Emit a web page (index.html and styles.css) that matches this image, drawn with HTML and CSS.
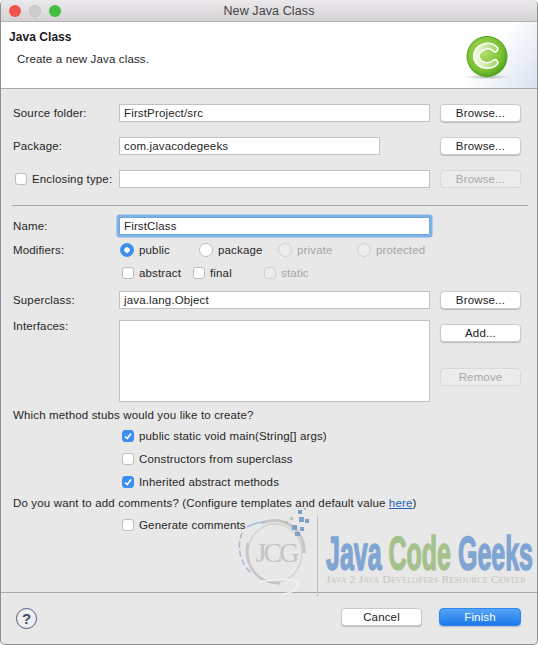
FILE: index.html
```html
<!DOCTYPE html>
<html lang="en">
<head>
    <meta charset="UTF-8">
    <title>New Java Class</title>
    <link rel="stylesheet" href="styles.css">
</head>
<body>
    <div class="window">
        <div class="titlebar">
            <div class="lights">
                <span class="light red"></span>
                <span class="light grey"></span>
                <span class="light green"></span>
            </div>
            <span class="title">New Java Class</span>
        </div>

        <div class="banner">
            <div>
                <h1>Java Class</h1>
                <p>Create a new Java class.</p>
            </div>
            <svg class="class-icon" width="46" height="44" viewBox="0 0 46 44">
                <defs>
                    <radialGradient id="ball" cx="0.42" cy="0.4" r="0.7">
                        <stop offset="0" stop-color="#b4de6c"/>
                        <stop offset="0.65" stop-color="#78c030"/>
                        <stop offset="1" stop-color="#3f9612"/>
                    </radialGradient>
                    <radialGradient id="ground">
                        <stop offset="0" stop-color="#7f8a70" stop-opacity="0.6"/>
                        <stop offset="1" stop-color="#7f8a70" stop-opacity="0"/>
                    </radialGradient>
                    <linearGradient id="inner" x1="0" y1="0" x2="1" y2="0">
                        <stop offset="0" stop-color="#eef8dc"/>
                        <stop offset="1" stop-color="#a8d870"/>
                    </linearGradient>
                </defs>
                <ellipse cx="23" cy="41" rx="23" ry="2.5" fill="url(#ground)"/>
                <circle cx="23" cy="20.5" r="20" fill="url(#ball)" stroke="#4f9e20"/>
                <path d="M31 13 C28 10 24 9.500 21 10.500 C15 12 12.500 16 12.500 20 C12.500 25.500 17 29.500 23 29.500 C26 29.500 29 28.500 31 26.500" fill="none" stroke="#fff" stroke-width="7" stroke-linecap="round"/>
                <path d="M31 13 C28 10 24 9.500 21 10.500 C15 12 12.500 16 12.500 20 C12.500 25.500 17 29.500 23 29.500 C26 29.500 29 28.500 31 26.500" fill="none" stroke="url(#inner)" stroke-width="4" stroke-linecap="round"/>
            </svg>
        </div>

        <div class="form">
            <div class="row">
                <span class="label">Source folder:</span>
                <div class="field">FirstProject/src</div>
                <button class="btn">Browse...</button>
            </div>
            <div class="row">
                <span class="label">Package:</span>
                <div class="field field-short">com.javacodegeeks</div>
                <button class="btn">Browse...</button>
            </div>
            <div class="row row-last">
                <span class="label label-check"><span class="check"></span>Enclosing type:</span>
                <div class="field"></div>
                <button class="btn" disabled>Browse...</button>
            </div>

            <hr class="rule">

            <div class="row row-name">
                <span class="label">Name:</span>
                <div class="field field-focus">FirstClass</div>
            </div>
            <div class="row row-modifiers">
                <span class="label">Modifiers:</span>
                <div class="options radios">
                    <span class="opt"><span class="radio on"></span>public</span>
                    <span class="opt"><span class="radio"></span>package</span>
                    <span class="opt off"><span class="radio"></span>private</span>
                    <span class="opt off"><span class="radio"></span>protected</span>
                </div>
            </div>
            <div class="row row-flags">
                <span class="label"></span>
                <div class="options flags">
                    <span class="opt"><span class="check"></span>abstract</span>
                    <span class="opt"><span class="check"></span>final</span>
                    <span class="opt off"><span class="check"></span>static</span>
                </div>
            </div>
            <div class="row row-super">
                <span class="label">Superclass:</span>
                <div class="field">java.lang.Object</div>
                <button class="btn">Browse...</button>
            </div>
            <div class="row row-interfaces">
                <span class="label">Interfaces:</span>
                <div class="field list"></div>
                <div class="side">
                    <button class="btn">Add...</button>
                    <button class="btn" disabled>Remove</button>
                </div>
            </div>

            <div class="row row-question">Which method stubs would you like to create?</div>
            <div class="row row-stub">
                <span class="label"></span>
                <span class="opt indent"><span class="check on"><svg width="8" height="8" viewBox="0 0 8 8"><path d="M1 4.500 L3.200 6.500 L7 1.500" fill="none" stroke="#fff" stroke-width="1.600"/></svg></span>public static void main(String[] args)</span>
            </div>
            <div class="row row-stub">
                <span class="label"></span>
                <span class="opt indent"><span class="check"></span>Constructors from superclass</span>
            </div>
            <div class="row row-stub-last">
                <span class="label"></span>
                <span class="opt indent"><span class="check on"><svg width="8" height="8" viewBox="0 0 8 8"><path d="M1 4.500 L3.200 6.500 L7 1.500" fill="none" stroke="#fff" stroke-width="1.600"/></svg></span>Inherited abstract methods</span>
            </div>
            <div class="row row-comments">Do you want to add comments? (Configure templates and default value&nbsp;<a href="#">here</a>)</div>
            <div class="row row-generate">
                <span class="label"></span>
                <span class="opt indent"><span class="check"></span>Generate comments</span>
            </div>
        </div>

        <div class="footer">
            <span class="help">?</span>
            <div class="footer-btns">
                <button class="btn">Cancel</button>
                <button class="btn btn-primary">Finish</button>
            </div>
        </div>

        <!-- watermark sits on top of the dialog -->
        <div class="watermark">
            <svg class="jcg" width="92" height="92" viewBox="0 0 92 92">
                <ellipse cx="45" cy="48" rx="27" ry="29" fill="none" stroke="#d2d2d2" stroke-width="1.500"/>
                <path d="M32 18 A30 30 0 0 1 74 48" fill="none" stroke="#c6c6c6" stroke-width="3"/>
                <path d="M18 38 A30 32 0 0 0 50 78" fill="none" stroke="#c6c6c6" stroke-width="2.500"/>
                <path d="M12 28 A36 36 0 0 0 20 67" fill="none" stroke="#a3bcd6" stroke-width="1.500" stroke-dasharray="6 3"/>
                <path d="M17 22 Q24 18 34 17" fill="none" stroke="#a3bcd6" stroke-width="1.500"/>
                <path d="M28 77 Q58 72 68 77 Q70 87 52 89" fill="none" stroke="#f3f3f3" stroke-width="1.500"/>
                <text x="46" y="57" text-anchor="middle" class="jcg-text">JCG</text>
                <g fill="#7f9fc6">
                    <rect x="69" y="12" width="5" height="5"/>
                    <rect x="62" y="20" width="5" height="5"/>
                    <rect x="70" y="22" width="4" height="4"/>
                    <rect x="75" y="14" width="4" height="4"/>
                    <rect x="60" y="12" width="3" height="3" fill="#b6c8a0"/>
                    <rect x="68" y="5" width="4" height="4"/>
                    <rect x="65" y="27" width="5" height="4"/>
                    <rect x="74" y="3" width="2" height="2" fill="#b6c8a0"/>
                    <rect x="55" y="16" width="3" height="3" fill="#b6c8a0"/>
                </g>
            </svg>
            <div class="wm-divider"></div>
            <div class="wm-text">
                <div class="wm-name"><span class="wm-blue">Java</span> <span class="wm-green">Code</span> <span class="wm-blue">Geeks</span></div>
                <div class="wm-tag">Java 2 Java Developers Resource Center</div>
            </div>
        </div>
    </div>
</body>
</html>
```
FILE: styles.css
```css
* {
    box-sizing: border-box;
}

html, body {
    margin: 0;
    padding: 0;
    background: #fff;
}

.window {
    position: relative;
    width: 538px;
    height: 645px;
    display: flex;
    flex-direction: column;
    overflow: hidden;
    background-color: #e8e8e8;
    border: 1px solid #8f8f8f;
    border-top: none;
    border-radius: 5px;
    font-family: "Liberation Sans", Arial, sans-serif;
    font-size: 11.5px;
    letter-spacing: 0.15px;
    color: #262626;
}

.titlebar {
    display: grid;
    grid-template-columns: 1fr auto 1fr;
    align-items: center;
    height: 22px;
    flex: none;
    background: linear-gradient(#ebe9eb, #d4d2d4);
    border-bottom: 1px solid #b4b4b4;
}

.lights {
    display: flex;
    gap: 8px;
    padding-left: 8px;
}

.light {
    width: 12px;
    height: 12px;
    border-radius: 50%;
}

.red { background-color: #f0544e; }
.grey { background-color: #cfcdcf; border: 1px solid #c2c0c2; }
.green { background-color: #45bd3f; }

.title {
    font-size: 12.5px;
    letter-spacing: 0.1px;
    color: #454545;
}

.banner {
    display: flex;
    justify-content: space-between;
    height: 67px;
    flex: none;
    padding: 8px 27px 0 8px;
    background: linear-gradient(127deg, #fff 87%, #d9e2f1 100%);
    border-bottom: 1px solid #a8a8a8;
}

.banner h1 {
    margin: 0;
    font-size: 12px;
    line-height: 14px;
    letter-spacing: 0.05px;
    color: #1c1c1c;
}

.banner p {
    margin: 8px 0 0 8px;
    line-height: 14px;
}

.class-icon {
    margin-top: 6px;
}

.form {
    padding: 15px 16px 0 12px;
}

.row {
    display: flex;
    align-items: center;
    height: 18px;
    margin-bottom: 15px;
}

.row-last { margin-bottom: 17px; }

.label {
    flex: none;
    width: 106px;
}

.label-check {
    display: flex;
    align-items: center;
    gap: 5px;
    padding-left: 2px;
    white-space: nowrap;
}

.field {
    flex: none;
    width: 311px;
    height: 18px;
    padding: 0 4px;
    line-height: 17px;
    background-color: #fff;
    border: 1px solid #c2c2c2;
}

.field-short {
    width: 261px;
    margin-right: 50px;
}

.field-focus {
    box-shadow: 0 0 0 2.500px #7fb3e8;
    border-color: #6ea6e0;
    border-radius: 1px;
}

.btn {
    flex: none;
    display: block;
    width: 81px;
    height: 18px;
    margin-left: 10px;
    padding: 0;
    font: inherit;
    letter-spacing: inherit;
    color: #222;
    background-color: #fff;
    border: 1px solid #cbcbcb;
    border-radius: 4px;
    box-shadow: 0 1px 1px rgba(0, 0, 0, 0.2);
}

.btn:disabled {
    color: #a9a9a9;
    background-color: #ececec;
    border-color: #d9d9d9;
    box-shadow: none;
}

.btn-primary {
    width: 82px;
    margin-left: 17px;
    color: #fff;
    background: linear-gradient(#55a4f6, #1c78ea);
    border-color: #2f86ee;
}

.rule {
    margin: 0 0 11px -1px;
    height: 1px;
    border: none;
    background-color: #a9a9a9;
    width: 516px;
}

.row-name { margin-bottom: 6px; }
.row-modifiers { margin-bottom: 5px; }
.row-flags { margin-bottom: 9px; }
.row-super { margin-bottom: 11px; }

.options {
    display: grid;
}

.radios {
    grid-template-columns: repeat(4, 79px);
    margin-left: 1px;
}

.flags {
    grid-template-columns: repeat(3, 71px);
    margin-left: 3px;
}

.opt {
    display: flex;
    align-items: center;
    gap: 5px;
    white-space: nowrap;
}

.opt.off {
    color: #a6a6a6;
}

.indent {
    margin-left: 3px;
}

.check {
    flex: none;
    display: flex;
    align-items: center;
    justify-content: center;
    width: 12px;
    height: 12px;
    background-color: #fff;
    border: 1px solid #bdbdbd;
    border-radius: 3px;
}

.check.on {
    background-color: #3c8ff0;
    border-color: #3c8ff0;
}

.off .check,
.off .radio {
    background-color: #ececec;
    border-color: #d0d0d0;
}

.radio {
    flex: none;
    width: 14px;
    height: 14px;
    background-color: #fff;
    border: 1px solid #bdbdbd;
    border-radius: 50%;
}

.radio.on {
    background: radial-gradient(circle, #fff 0 2.500px, #3c8ff0 3px);
    border-color: #3c8ff0;
}

.row-interfaces {
    align-items: flex-start;
    height: 82px;
    margin-bottom: 4px;
}

.list {
    height: 82px;
}

.side {
    display: flex;
    flex-direction: column;
    gap: 26px;
    padding-top: 4px;
}

.row-question { margin-bottom: 3px; }
.row-stub { margin-bottom: 5px; }
.row-stub-last { margin-bottom: 3px; }
.row-comments { margin-bottom: 4px; }

.row-comments a {
    color: #1f62b4;
}

.footer {
    display: flex;
    align-items: center;
    justify-content: space-between;
    flex: none;
    height: 52px;
    margin-top: auto;
    padding: 0 16px 0 15px;
    border-top: 1px solid #a9a9a9;
}

.help {
    display: flex;
    align-items: center;
    justify-content: center;
    width: 21px;
    height: 21px;
    font-size: 15px;
    font-weight: bold;
    letter-spacing: 0;
    color: #3f4e6b;
    background-color: #eef0f4;
    border: 1.500px solid #4d5c7a;
    border-radius: 50%;
}

.footer-btns {
    display: flex;
    margin-top: -3px;
}

.watermark {
    position: absolute;
    left: 229px;
    top: 505px;
    display: flex;
    pointer-events: none;
}

.jcg {
    flex: none;
}

.jcg-text {
    font-family: "Liberation Serif", serif;
    font-size: 28px;
    letter-spacing: -3px;
    fill: #c4c4c4;
}

.wm-divider {
    flex: none;
    width: 1px;
    height: 82px;
    margin: 10px 0 0 -5px;
    background-color: #c2c2c2;
}

.wm-text {
    width: 208px;
    margin: 28px 0 0 8px;
}

.wm-name {
    font-size: 49px;
    line-height: 40px;
    font-weight: bold;
    letter-spacing: 0;
    white-space: nowrap;
    transform: scaleX(0.51);
    transform-origin: left top;
    -webkit-text-stroke: 1.500px currentColor;
}

.wm-blue { color: #7fa5d2; }
.wm-green { color: #a5c28c; }

.wm-tag {
    font-family: "Liberation Serif", serif;
    font-size: 11px;
    font-variant: small-caps;
    letter-spacing: 0.3px;
    line-height: 12px;
    white-space: nowrap;
    color: #c5c7b6;
}
```
